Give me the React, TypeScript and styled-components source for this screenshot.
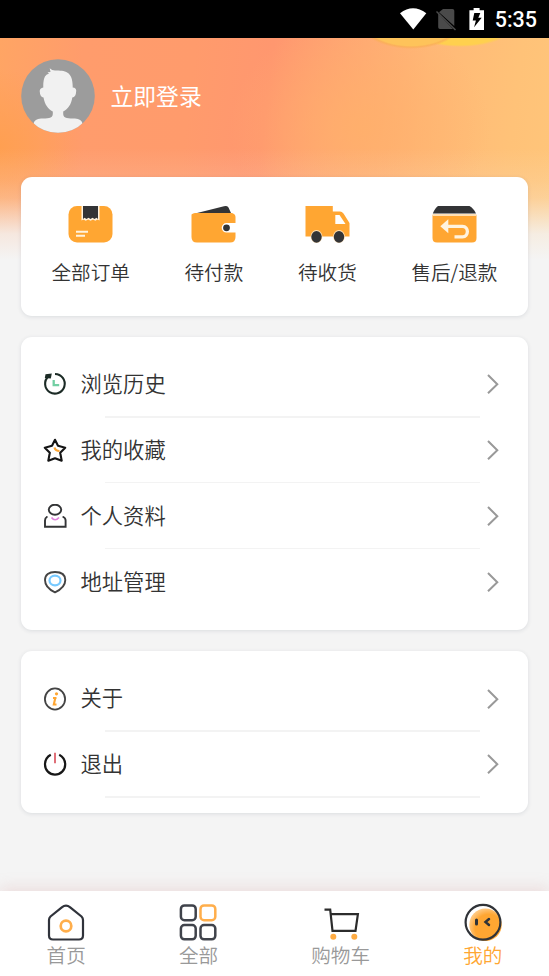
import React from "react";
import styled, { createGlobalStyle } from "styled-components";

const GlobalStyle = createGlobalStyle`
  * { box-sizing: border-box; }
  body {
    margin: 0;
    background: #f4f4f4;
    font-family: "Noto Sans CJK SC", sans-serif;
    font-weight: 350;
    color: #333;
  }
`;

const Page = styled.div`
  width: 549px;
  height: 976px;
  display: flex;
  flex-direction: column;
  overflow: hidden;
  background: #f4f4f4;
`;

const StatusBar = styled.header`
  flex: none;
  height: 38px;
  background: #000;
  color: #fff;
  display: flex;
  justify-content: flex-end;
  padding-right: 12px;
`;

const Clock = styled.span`
  font: 500 21.5px/38px Roboto, sans-serif;
  margin-left: 9px;
  padding-top: 1px;
`;

const Main = styled.main`
  flex: 1;
  display: flex;
  flex-direction: column;
  gap: 21px;
  padding: 0 21px;
  background:
    linear-gradient(to bottom, transparent 110px, rgba(244, 244, 244, 0.12) 142px, rgba(244, 244, 244, 0.25) 160px, rgba(244, 244, 244, 0.55) 178px, rgba(244, 244, 244, 0.85) 196px, #f4f4f4 222px),
    radial-gradient(ellipse 52px 28px at 411px -17px, #fec35a 88%, rgba(250, 175, 85, 0.8) 93%, rgba(254, 189, 95, 0) 100%),
    radial-gradient(ellipse 50px 18px at 460px -9px, #ffd04e 88%, rgba(255, 208, 78, 0) 100%),
    radial-gradient(ellipse 90px 80px at -6px 110px, #ff9f50 0%, rgba(255, 159, 80, 0) 100%),
    radial-gradient(ellipse 130px 110px at 360px 90px, rgba(255, 176, 106, 0.8), rgba(255, 176, 106, 0) 100%),
    linear-gradient(97deg, #ffa564 0%, #ff9c6c 13%, #ff9b6c 30%, #ff976f 42%, #ffa673 53%, #ffb877 66%, #ffc278 80%, #ffca7d 100%);
  background-repeat: no-repeat;
`;

const Profile = styled.div`
  flex: none;
  height: 118px;
  padding-top: 21px;
  display: flex;
  align-items: flex-start;
  gap: 15.5px;
  color: #fff;
  font-size: 22.8px;
  font-weight: 400;
  line-height: 73px;
`;

const Card = styled.section`
  flex: none;
  background: #fff;
  border-radius: 11px;
  box-shadow: 0 1px 4px rgba(40, 60, 80, 0.12);
`;

const OrderCard = styled(Card)`
  height: 139px;
  padding: 29px 30.5px 0 30.5px;
  display: flex;
  justify-content: space-between;
`;

const OrderItem = styled.div`
  display: flex;
  flex-direction: column;
  align-items: center;
  gap: 14px;
  font-size: 19.6px;
  line-height: 30px;
  white-space: nowrap;
`;

const ListCard = styled(Card)`
  padding: 14px 0 16px;
`;

const ListRow = styled.div`
  height: 65.8px;
  padding: 1px 29px 0 22px;
  display: flex;
  align-items: center;
  font-size: 21.3px;
`;

const RowLabel = styled.span`
  flex: 1;
  margin-left: 13.5px;
  line-height: 30px;
  padding-bottom: 2.4px;
`;

const Divider = styled.hr`
  border: 0;
  height: 1.5px;
  margin: -0.75px 48px -0.75px 84px;
  background: #f3f3f3;
`;

const TabBar = styled.nav`
  flex: none;
  height: 85px;
  background: #fff;
  display: flex;
  justify-content: space-around;
  box-shadow: 0 -3px 14px rgba(215, 150, 150, 0.25);
`;

const Tab = styled.div<{ $active?: boolean }>`
  display: flex;
  flex-direction: column;
  align-items: center;
  padding-top: 12px;
  color: ${(p) => (p.$active ? "#ffa632" : "#999")};
  font-size: 19.6px;
  line-height: 26px;
  svg { flex: none; }
`;

const StatusIcons = () => (
  <svg width="88" height="38" viewBox="398 0 88 38">
    <path d="M400 13.200Q413 3.500 426.300 13.200L413.300 29.500Z" fill="#fff" />
    <path d="M443 9h9.500q1.800 0 1.800 1.800V26L439 12.200ZM438.200 13.500L453 29H440q-1.800 0-1.800-1.800Z" fill="#4a4a4a" />
    <path d="M436.500 11.500L455.500 30" stroke="#4a4a4a" strokeWidth="1.500" />
    <path d="M473.600 8h6v2.200h4.400V30h-14.600V10.200h4.200Z" fill="#fff" />
    <path d="M474.300 13h6l-2 4.700h3.400l-7.600 9.600 1.800-6.800h-3.200Z" fill="#000" />
  </svg>
);

const Avatar = () => (
  <svg width="74" height="74" viewBox="0 0 74 74">
    <defs><clipPath id="face"><circle cx="37" cy="37" r="36.800" /></clipPath></defs>
    <circle cx="37" cy="37" r="36.800" fill="#9c9c9c" />
    <path clipPath="url(#face)" fill="#f1f1f1" d="M28.700 9.300Q31 11.500 34 11.500C44 11.500 52 12 51.700 28.500Q55.500 29 55.200 32Q55 38 51.300 38.500C50.500 45 47 50 42.200 52.500V55C42.200 60 48 59.300 54 59.500Q60.500 60 61.500 64.500L55 76H19L12.500 64.500Q13.500 60 20 59.500C26 59.300 31.800 60 31.800 55V52.500C27 50 23.500 45 22.500 38.500Q19 38 18.700 32Q18.800 29 22.300 28.500Q22 21 24 17.500Q25 15.500 28 14.500L26.500 13.200L29.500 13Z" />
  </svg>
);

const Dark = "#333436";
const Orange = "#ffa632";

const Orders = () => (
  <svg width="45" height="37" viewBox="0 0 45 37">
    <rect x=".5" width="44" height="36.500" rx="8.500" fill={Orange} />
    <path d="M13.500 0h18v14.500l-2-1-2.200 1.300-2.300-1.300-2.500 1.300-2.300-1.300-2.500 1.300-2.200-1.300-2 1Z" fill="#fff3df" />
    <path d="M15 0h15v13l-1.500-1.200-2 1.200-2-1.200-2 1.200-2-1.200-2 1.200-2-1.200L15 13Z" fill={Dark} />
    <path d="M8 25.700h12M8 29.800h9" stroke="#fff3df" strokeWidth="1.900" />
  </svg>
);

const Wallet = () => (
  <svg width="45" height="37" viewBox="0 0 45 37">
    <path d="M6 7L33 .3q3-.8 4.500 1.200l2.500 5.500Z" fill={Dark} />
    <path d="M4 7h37q3.500 1 3.500 4v6h-9a4.600 4.600 0 0 0 0 9.600h9V31q0 5.500-5.500 5.500H6Q.5 36.500.5 31V8.500Q2 7 4 7Z" fill={Orange} />
    <circle cx="35.500" cy="21.800" r="3.400" fill={Dark} />
  </svg>
);

const Truck = () => (
  <svg width="45" height="37" viewBox="0 0 45 37">
    <path d="M.5 0h27.300v5.500H35q2 0 3.500 2L44.500 17v13.500H.5Z" fill={Orange} />
    <path d="M30.300 9h4.200l6 9H30.300Z" fill="#fff" />
    <ellipse cx="11.500" cy="30.500" rx="5.900" ry="6.500" fill="#ffe0b5" />
    <ellipse cx="34" cy="30.500" rx="5.900" ry="6.500" fill="#ffe0b5" />
    <ellipse cx="11.500" cy="30.800" rx="5.200" ry="5.900" fill={Dark} />
    <ellipse cx="34" cy="30.800" rx="5.200" ry="5.900" fill={Dark} />
  </svg>
);

const Refund = () => (
  <svg width="45" height="37" viewBox="0 0 45 37">
    <path d="M6 0h31.500q4 2 6.500 7.500H.8Q3 2 6 0Z" fill={Dark} />
    <path d="M.5 9h44v23q0 4.500-4.500 4.500H5Q.5 36.500.5 32Z" fill={Orange} />
    <path d="M.5 8h44v2H.5Z" fill="#ffe0b5" />
    <path d="M12 20.300h18.500c6.500 0 6.500 10.500 0 10.500H22.500" fill="none" stroke="#fff3df" strokeWidth="3.300" />
    <path d="M8.300 20.300l8-7v14Z" fill="#fff3df" />
  </svg>
);

const RowSvg = styled.svg.attrs({ width: 24, height: 24, viewBox: "0 0 24 24", fill: "none" })`
  flex: none;
`;

const History = () => (
  <RowSvg>
    <path d="M12 2a9.800 9.800 0 1 1-6.500 2.400" stroke="#1c2b26" strokeWidth="2.100" />
    <path d="M1.800 6L2.500 2.200l6.300-.8-1 5Z" fill="#1c2b26" />
    <path d="M10.700 8v5.200h5.500" stroke="#72cfa3" strokeWidth="2.300" />
  </RowSvg>
);
const Star = () => (
  <RowSvg>
    <path d="M12 1.800l3 6 7.200 1.900-5 5 1.500 8-6.700-2.500-6.700 2.500 1.500-8-5-5L9 7.800Z" stroke="#151515" strokeWidth="2.100" strokeLinejoin="round" />
    <path d="M11.500 9.500q1 3.500 5 3.500" stroke="#ffa632" strokeWidth="2.200" />
  </RowSvg>
);
const Person = () => (
  <RowSvg>
    <ellipse cx="12" cy="5.700" rx="6.200" ry="5" stroke={Dark} strokeWidth="1.900" />
    <path d="M4.500 13H3.800Q2 14 2 16.500V22.700h20.600V16.500Q22.600 14 20.300 13h-.7" stroke={Dark} strokeWidth="1.900" />
    <path d="M8.500 13.500q3.500 4.500 7.500 0" stroke="#df82dc" strokeWidth="1.700" />
  </RowSvg>
);
const Location = () => (
  <RowSvg>
    <path d="M12 2C6 2 2 4.500 2 10c0 6.500 6 10.500 10 12.300 4-1.800 10.300-5.800 10.300-12.300C22.300 4.500 18 2 12 2Z" stroke="#444" strokeWidth="1.900" />
    <ellipse cx="12" cy="10.500" rx="5.500" ry="4.800" stroke="#76c9ff" strokeWidth="2.200" />
  </RowSvg>
);
const About = () => (
  <RowSvg>
    <ellipse cx="12" cy="12" rx="10.100" ry="10.600" stroke="#444" strokeWidth="1.800" />
    <circle cx="13.500" cy="6.800" r="1.600" fill={Orange} />
    <path d="M10 11h3.500M12.300 11l-1.500 6.500h2.700" stroke={Orange} strokeWidth="2.100" />
  </RowSvg>
);
const Power = () => (
  <RowSvg>
    <path d="M7.800 2.700C3.800 4.800 2 8.600 2 12.500C2 18 6.300 22.600 12 22.600S22.200 18 22.200 12.500C22.200 8.600 20.200 4.800 16.200 2.700" stroke="#171717" strokeWidth="2.200" />
    <path d="M12 .8v10.500" stroke="#df6f78" strokeWidth="2" />
  </RowSvg>
);

const Chevron = () => (
  <svg width="12" height="20" viewBox="0 0 12 20" fill="none">
    <path d="M1 1l9.300 9.200-9.300 9" stroke="#999" strokeWidth="2" />
  </svg>
);

const Home = () => (
  <svg width="39" height="39" viewBox="0.5 0 39 39" fill="none">
    <path d="M15.300 4.300q4.200-3.500 8.400 0L35 13.500q1.500 1.500 1.500 3.500v15.500q0 4-4 4h-26q-4 0-4-4V17q0-2 1.500-3.500Z" stroke="#30333b" strokeWidth="2.200" />
    <circle cx="19.500" cy="23" r="5.300" stroke="#ffae4b" strokeWidth="2.700" />
  </svg>
);
const Grid = () => (
  <svg width="39" height="39" viewBox="0.5 0 39 39" fill="none" strokeWidth="2.500">
    <rect x="2.400" y="2.400" width="14.800" height="14.800" rx="3.500" stroke="#40434b" />
    <rect x="22" y="2.400" width="14.800" height="14.800" rx="3.500" stroke="#ffae4b" />
    <rect x="2.400" y="22" width="14.800" height="14.300" rx="3.500" stroke="#40434b" />
    <rect x="22" y="22" width="14.800" height="14.300" rx="3.500" stroke="#40434b" />
  </svg>
);
const Cart = () => (
  <svg width="39" height="39" viewBox="0 0 39 39" fill="none">
    <path d="M3.500 6.700h5.700l2.300 21.200h23l2.400-16.700H9.700" stroke="#2c2c2c" strokeWidth="2.200" />
    <circle cx="12.300" cy="33.700" r="3" fill="#ffac43" />
    <circle cx="33.300" cy="33.700" r="3" fill="#ffac43" />
  </svg>
);
const Face = () => (
  <svg width="39" height="39" viewBox="-0.500 0 39 39" fill="none">
    <defs>
      <radialGradient id="glow" cx=".6" cy=".6" r=".6">
        <stop offset=".7" stopColor={Orange} />
        <stop offset="1" stopColor="#ffc67c" />
      </radialGradient>
    </defs>
    <circle cx="22" cy="21.700" r="16.200" fill="url(#glow)" />
    <circle cx="19.500" cy="19.300" r="17.400" stroke="#303338" strokeWidth="2.200" />
    <path d="M13 17v4" stroke="#303338" strokeWidth="3" strokeLinecap="round" />
    <path d="M25.500 16l-3.500 3 3.500 3" stroke="#303338" strokeWidth="2.500" strokeLinecap="round" />
  </svg>
);

type Entry = [string, React.FC];

const orders: Entry[] = [["全部订单", Orders], ["待付款", Wallet], ["待收货", Truck], ["售后/退款", Refund]];
const personal: Entry[] = [["浏览历史", History], ["我的收藏", Star], ["个人资料", Person], ["地址管理", Location]];
const system: Entry[] = [["关于", About], ["退出", Power]];
const tabs: Entry[] = [["首页", Home], ["全部", Grid], ["购物车", Cart], ["我的", Face]];

const MenuList = ({ items, closed }: { items: Entry[]; closed?: boolean }) => (
  <ListCard>
    {items.map(([label, Icon], i) => (
      <React.Fragment key={label}>
        <ListRow>
          <Icon />
          <RowLabel>{label}</RowLabel>
          <Chevron />
        </ListRow>
        {(closed || i < items.length - 1) && <Divider />}
      </React.Fragment>
    ))}
  </ListCard>
);

export default function App() {
  return (
    <Page>
      <GlobalStyle />
      <StatusBar>
        <StatusIcons />
        <Clock>5:35</Clock>
      </StatusBar>
      <Main>
        <Profile>
          <Avatar />
          <span>立即登录</span>
        </Profile>
        <OrderCard>
          {orders.map(([label, Icon]) => (
            <OrderItem key={label}>
              <Icon />
              <span>{label}</span>
            </OrderItem>
          ))}
        </OrderCard>
        <MenuList items={personal} />
        <MenuList items={system} closed />
      </Main>
      <TabBar>
        {tabs.map(([label, Icon]) => (
          <Tab key={label} $active={label === "我的"}>
            <Icon />
            <span>{label}</span>
          </Tab>
        ))}
      </TabBar>
    </Page>
  );
}
